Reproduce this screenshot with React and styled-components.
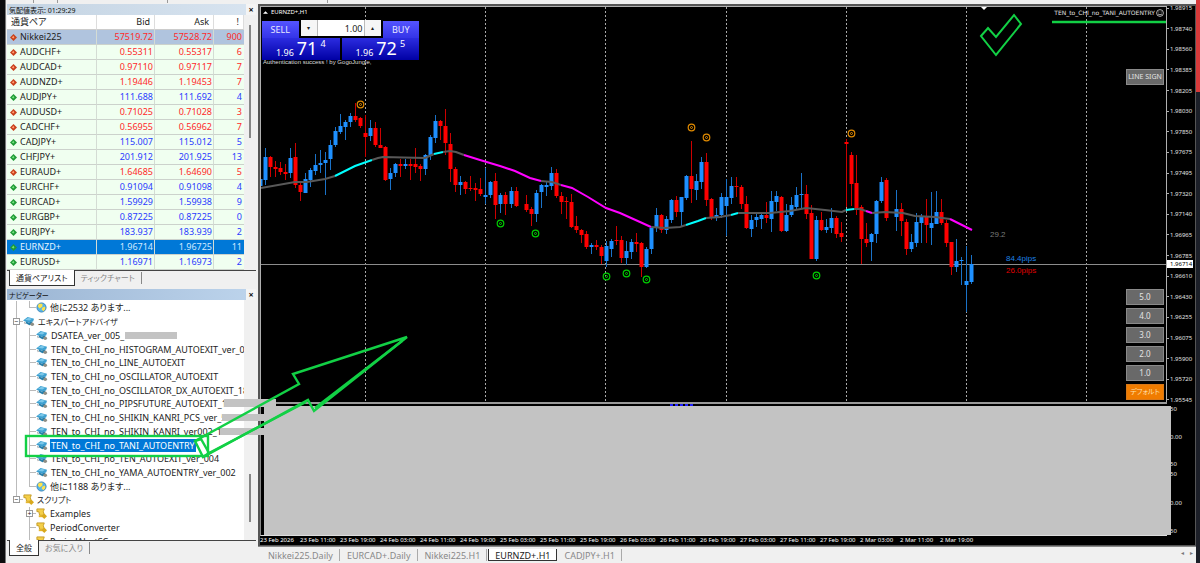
/** @format */
import React, { useState } from "react";
import styled, { createGlobalStyle } from "styled-components";

const quotes = [
  ["Nikkei225", "57519.72", "57528.72", "900", "down"],
  ["AUDCHF+", "0.55311", "0.55317", "6", "down"],
  ["AUDCAD+", "0.97110", "0.97117", "7", "down"],
  ["AUDNZD+", "1.19446", "1.19453", "7", "down"],
  ["AUDJPY+", "111.688", "111.692", "4", "up"],
  ["AUDUSD+", "0.71025", "0.71028", "3", "down"],
  ["CADCHF+", "0.56955", "0.56962", "7", "down"],
  ["CADJPY+", "115.007", "115.012", "5", "up"],
  ["CHFJPY+", "201.912", "201.925", "13", "up"],
  ["EURAUD+", "1.64685", "1.64690", "5", "down"],
  ["EURCHF+", "0.91094", "0.91098", "4", "up"],
  ["EURCAD+", "1.59929", "1.59938", "9", "up"],
  ["EURGBP+", "0.87225", "0.87225", "0", "up"],
  ["EURJPY+", "183.937", "183.939", "2", "up"],
  ["EURNZD+", "1.96714", "1.96725", "11", "up"],
  ["EURUSD+", "1.16971", "1.16973", "2", "up"],
];

const tree = [
  { icon: "globe", text: "他に2532 あります...", last: true },
  { icon: "hat", text: "エキスパートアドバイザ", root: true },
  { icon: "hat", text: "DSATEA_ver_005_", mask: true },
  { icon: "hat", text: "TEN_to_CHI_no_HISTOGRAM_AUTOEXIT_ver_004" },
  { icon: "hat", text: "TEN_to_CHI_no_LINE_AUTOEXIT" },
  { icon: "hat", text: "TEN_to_CHI_no_OSCILLATOR_AUTOEXIT" },
  { icon: "hat", text: "TEN_to_CHI_no_OSCILLATOR_DX_AUTOEXIT_18" },
  { icon: "hat", text: "TEN_to_CHI_no_PIPSFUTURE_AUTOEXIT_18DBE" },
  { icon: "hat", text: "TEN_to_CHI_no_SHIKIN_KANRI_PCS_ver_5" },
  { icon: "hat", text: "TEN_to_CHI_no_SHIKIN_KANRI_ver002_10" },
  { icon: "hat", text: "TEN_to_CHI_no_TANI_AUTOENTRY", selected: true },
  { icon: "hat", text: "TEN_to_CHI_no_TEN_AUTOEXIT_ver_004" },
  { icon: "hat", text: "TEN_to_CHI_no_YAMA_AUTOENTRY_ver_002" },
  { icon: "globe", text: "他に1188 あります...", last: true },
  { icon: "scroll", text: "スクリプト", root: true, end: true },
  { icon: "scroll", text: "Examples", expand: true, outer: true },
  { icon: "scroll", text: "PeriodConverter", outer: true },
  { icon: "scroll", text: "PeriodAlertSC", outer: true },
];

const prices = [
  "1.98915", "1.98740", "1.98560", "1.98385", "1.98205", "1.98030", "1.97850",
  "1.97675", "1.97495", "1.97320", "1.97140", "1.96965", "1.96785", "1.96610",
  "1.96430", "1.96255", "1.96075", "1.95900", "1.95720", "1.95545",
];

const times = [
  "23 Feb 2026", "23 Feb 11:00", "23 Feb 19:00", "24 Feb 03:00", "24 Feb 11:00",
  "24 Feb 19:00", "25 Feb 03:00", "25 Feb 11:00", "25 Feb 19:00", "26 Feb 03:00",
  "26 Feb 11:00", "26 Feb 19:00", "27 Feb 03:00", "27 Feb 11:00", "27 Feb 19:00",
  "2 Mar 03:00", "2 Mar 11:00", "2 Mar 19:00",
];

// index, high, body top, body bottom, low, 1 = up / 0 = down
const candles = [
  [0, 175, 179, 186, 193, 1], [1, 148, 157, 180, 185, 1], [2, 156, 157, 167, 177, 0],
  [3, 161, 167, 169, 177, 0], [4, 162, 168, 172, 175, 0], [5, 164, 172, 174, 180, 0],
  [6, 148, 158, 173, 178, 1], [7, 143, 157, 185, 188, 0], [8, 183, 185, 192, 201, 0],
  [9, 173, 179, 193, 193, 1], [10, 168, 170, 180, 187, 1], [11, 154, 165, 171, 175, 1],
  [12, 150, 163, 165, 173, 1], [13, 152, 160, 163, 195, 1], [14, 140, 145, 159, 170, 1],
  [15, 127, 131, 145, 147, 1], [16, 114, 126, 132, 134, 1], [17, 120, 122, 127, 140, 1],
  [18, 113, 116, 122, 127, 1], [19, 103, 116, 120, 122, 0], [20, 117, 118, 126, 128, 0],
  [21, 115, 133, 137, 157, 0], [22, 120, 128, 136, 141, 1], [23, 122, 128, 145, 147, 0],
  [24, 128, 145, 148, 148, 0], [25, 146, 147, 180, 181, 0], [26, 168, 173, 179, 190, 1],
  [27, 163, 164, 173, 177, 1], [28, 159, 164, 166, 177, 0], [29, 159, 164, 166, 169, 1],
  [30, 159, 164, 166, 180, 0], [31, 148, 164, 167, 173, 0], [32, 164, 166, 169, 181, 0],
  [33, 154, 155, 169, 175, 1], [34, 135, 137, 156, 160, 1], [35, 115, 121, 138, 143, 1],
  [36, 120, 121, 126, 140, 0], [37, 109, 126, 143, 155, 0], [38, 133, 144, 169, 182, 0],
  [39, 167, 169, 185, 192, 0], [40, 176, 182, 185, 195, 1], [41, 181, 182, 189, 194, 0],
  [42, 176, 188, 189, 191, 0], [43, 183, 188, 190, 201, 0], [44, 178, 189, 194, 196, 0],
  [45, 168, 195, 197, 204, 1], [46, 181, 182, 195, 198, 1], [47, 173, 181, 205, 219, 0],
  [48, 193, 195, 204, 213, 1], [49, 192, 195, 204, 215, 0], [50, 187, 191, 204, 208, 1],
  [51, 187, 191, 206, 207, 0], [53, 195, 204, 210, 212, 0], [54, 207, 209, 214, 226, 0],
  [55, 190, 193, 214, 222, 1], [56, 184, 185, 192, 208, 1], [57, 182, 185, 187, 196, 1],
  [58, 167, 173, 186, 190, 1], [59, 169, 173, 196, 198, 0], [60, 192, 196, 202, 214, 0],
  [61, 197, 201, 202, 219, 0], [62, 194, 202, 227, 228, 0], [63, 216, 226, 230, 233, 0],
  [64, 229, 230, 235, 243, 0], [65, 231, 234, 247, 249, 0], [66, 243, 245, 247, 254, 1],
  [67, 240, 245, 247, 250, 0], [68, 245, 247, 256, 264, 0], [69, 241, 246, 261, 267, 1],
  [70, 239, 241, 249, 257, 1], [71, 226, 240, 241, 245, 0], [72, 236, 240, 258, 263, 0],
  [73, 241, 251, 258, 265, 1], [74, 239, 242, 252, 259, 1], [75, 233, 242, 244, 252, 0],
  [76, 242, 243, 267, 277, 0], [77, 247, 249, 267, 268, 1], [78, 227, 228, 249, 254, 1],
  [79, 208, 215, 228, 232, 1], [80, 214, 215, 230, 233, 0], [81, 216, 219, 230, 234, 1],
  [82, 199, 200, 220, 223, 1], [83, 196, 200, 212, 217, 0], [84, 197, 197, 212, 226, 1],
  [85, 175, 176, 198, 200, 1], [86, 141, 176, 189, 203, 0], [87, 174, 181, 190, 200, 1],
  [88, 157, 162, 182, 189, 1], [89, 153, 162, 200, 206, 0], [90, 198, 199, 218, 220, 0],
  [91, 208, 215, 217, 221, 1], [92, 193, 197, 215, 218, 1], [93, 179, 197, 206, 236, 1],
  [94, 177, 186, 198, 204, 1], [95, 177, 186, 187, 197, 0], [96, 185, 187, 204, 209, 0],
  [97, 196, 204, 228, 229, 0], [98, 215, 220, 229, 237, 1], [99, 214, 217, 220, 227, 1],
  [100, 213, 215, 219, 229, 1], [101, 202, 215, 218, 223, 0], [102, 191, 201, 219, 232, 1],
  [103, 191, 196, 202, 211, 1], [104, 196, 197, 231, 232, 0], [105, 204, 215, 231, 232, 1],
  [106, 197, 205, 215, 217, 1], [107, 187, 195, 207, 209, 1], [108, 173, 194, 195, 209, 1],
  [109, 185, 194, 214, 219, 0], [110, 205, 213, 259, 259, 0], [111, 216, 220, 259, 261, 1],
  [112, 212, 220, 230, 231, 0], [113, 219, 227, 230, 233, 1], [114, 208, 218, 228, 233, 1],
  [115, 216, 218, 234, 238, 0], [116, 222, 233, 237, 242, 0], [117, 139, 142, 144, 207, 0],
  [118, 152, 155, 184, 206, 0], [119, 155, 183, 208, 215, 0], [120, 205, 207, 239, 264, 0],
  [121, 223, 239, 243, 247, 0], [122, 233, 234, 242, 261, 1], [123, 200, 201, 234, 243, 1],
  [124, 177, 182, 201, 203, 1], [125, 178, 180, 218, 221, 0], [127, 190, 209, 217, 231, 1],
  [128, 203, 209, 221, 236, 0], [129, 219, 222, 249, 255, 0], [130, 234, 242, 249, 252, 1],
  [131, 213, 222, 243, 247, 1], [132, 214, 217, 223, 243, 1], [133, 199, 217, 225, 243, 0],
  [134, 192, 223, 228, 245, 1], [135, 191, 212, 224, 224, 1], [136, 199, 212, 223, 225, 0],
  [137, 220, 223, 243, 247, 0], [138, 242, 242, 267, 275, 0], [139, 239, 261, 267, 272, 1],
  [140, 257, 260, 261, 285, 1], [141, 246, 281, 285, 312, 1], [142, 255, 264, 282, 284, 1],
];

const average = [
  ["#585858", "261,188 295,182 307,182 325,179 335,176"],
  ["#00ffff", "335,176 355,166 372,160"],
  ["#585858", "372,160 378,158 383,157 425,158 434,154"],
  ["#00ffff", "434,154 443,152"],
  ["#585858", "443,152 450,151 456,152 464,155"],
  ["#ff00ff", "464,155 480,160 500,166 515,171 530,178 541,181"],
  ["#585858", "541,181 552,182 561,185"],
  ["#ff00ff", "561,185 572,188 588,197 606,208 620,213 640,222 651,227"],
  ["#585858", "651,227 665,228 680,227 686,225"],
  ["#00ffff", "686,225 698,221 706,218"],
  ["#585858", "706,218 720,217 731,215"],
  ["#00ffff", "731,215 738,213"],
  ["#585858", "738,213 770,213 790,211 806,208 825,210 842,212 846,210"],
  ["#00ffff", "846,210 854,209"],
  ["#585858", "854,209 860,209 866,211"],
  ["#ff00ff", "866,211 872,213"],
  ["#585858", "872,213 885,212 903,213 915,216 935,217 950,219"],
  ["#ff00ff", "950,219 960,224 966,227 972,230"],
];

const sellSignals = [[360, 104], [691, 127], [706, 137], [851, 133]];
const buySignals = [[500, 223], [535, 233], [606, 276], [626, 273], [646, 279], [816, 275]];
const days = [366, 486, 606, 727, 847, 967, 1087];
const sizes = ["5.0", "4.0", "3.0", "2.0", "1.0"];
const chartTabs = ["Nikkei225.Daily", "EURCAD+.Daily", "Nikkei225.H1", "EURNZD+.H1", "CADJPY+.H1"];

function TreeIcon({ name }) {
  if (name === "globe")
    return (
      <svg width="11" height="11" viewBox="0 0 12 12">
        <circle cx="6" cy="6" r="5" fill="#58b4e8" stroke="#3b84b8" />
        <path d="M3 2l4 0 0 3-3 2-2-2zM7 6l3-1 0 3-2 2-2-2z" fill="#ffe34a" />
      </svg>
    );
  if (name === "scroll")
    return (
      <svg width="11" height="11" viewBox="0 0 12 12">
        <path d="M1 1h8l-1 3 1 4H4L3 4H1z" fill="#f4cf4a" stroke="#c49a24" />
        <path d="M3 8h6v2H3z" fill="#e4b730" />
        <path d="M9 6l3 3-3 3-3-3z" fill="#d9a91c" />
      </svg>
    );
  return (
    <svg width="12" height="11" viewBox="0 0 13 12">
      <path d="M0 5l5-4 7 2-1 3-6 1z" fill="#3ea0d0" />
      <path d="M2 4l4-2 4 1-3 2z" fill="#7cc8ea" />
      <path d="M3 6l3 1 4-1v3l-3 1-4-2z" fill="#267fab" />
      <path d="M1 6l2 2-1 1z" fill="#8a8a8a" />
      <circle cx="10" cy="9" r="2" fill="#8f8f86" />
    </svg>
  );
}

function MarketWatch() {
  return (
    <>
      <TitleBar $pale>
        気配値表示: 01:29:29
        <Close aria-label="close market watch">×</Close>
      </TitleBar>
      <Scroller>
        <Quotes>
          <thead>
            <tr>
              <Head $left>通貨ペア</Head>
              <Head $w="58px">Bid</Head>
              <Head $w="59px">Ask</Head>
              <Head $w="30px">!</Head>
            </tr>
          </thead>
          <tbody>
            {quotes.map(([name, bid, ask, spread, dir], i) => (
              <QuoteRow key={name} $dir={dir} $first={i === 0} $active={name === "EURNZD+"}>
                <Cell $left>
                  <Symbol>
                    <svg width="7" height="7" viewBox="0 0 8 8">
                      <path
                        d="M4 0l4 4-4 4-4-4z"
                        fill={dir === "up" ? "#1f9a36" : "#c8401c"}
                      />
                      <path d="M4 2l1 2-1 1-2-1z" fill={dir === "up" ? "#6fe07c" : "#ff9a70"} />
                    </svg>
                    {name}
                  </Symbol>
                </Cell>
                <Cell>{bid}</Cell>
                <Cell>{ask}</Cell>
                <Cell>{spread}</Cell>
              </QuoteRow>
            ))}
          </tbody>
        </Quotes>
        <Track>
          <Thumb $top="10px" $height="113px" />
        </Track>
      </Scroller>
      <PanelTabs>
        <PanelTab $active>通貨ペアリスト</PanelTab>
        <PanelTab>ティックチャート</PanelTab>
      </PanelTabs>
    </>
  );
}

function Navigator() {
  return (
    <>
      <TitleBar>
        ナビゲーター
        <Close aria-label="close navigator">×</Close>
      </TitleBar>
      <NavBody>
        <Tree>
          {tree.map((n) => (
            <Node key={n.text}>
              <Guide $end={n.end} $none={n.outer} $across={n.root}>
                {n.root && <Expander>−</Expander>}
              </Guide>
              {!n.root && (
                <Guide $end={n.last} $across>
                  {n.expand && <Expander>+</Expander>}
                </Guide>
              )}
              <TreeIcon name={n.icon} />
              <NodeText $selected={n.selected} $kana={n.root}>
                {n.text}
              </NodeText>
              {n.mask && <Mask />}
            </Node>
          ))}
        </Tree>
        <Track>
          <Thumb $top="174px" $height="48px" />
        </Track>
      </NavBody>
      <PanelTabs>
        <PanelTab $active>全般</PanelTab>
        <PanelTab>お気に入り</PanelTab>
      </PanelTabs>
    </>
  );
}

function Signal({ x, y, color }) {
  return (
    <g fill="none" stroke={color}>
      <circle cx={x + 0.5} cy={y + 0.5} r="3.3" strokeWidth="1.2" />
      <circle cx={x + 0.5} cy={y + 0.5} r="1" />
    </g>
  );
}

function Candles() {
  return (
    <Drawing height="395">
      <g transform="translate(-261 -7)">
        {days.map((x) => (
          <path key={x} d={`M${x - 0.5} 7V402`} stroke="#a8a8a8" strokeDasharray="2 2" />
        ))}
        <path d="M261 264.5H1166" stroke="#8c8c8c" />
        {candles.map(([i, high, top, bottom, low, up]) => {
          const x = Math.round(260 + i * 5.01);
          return (
            <g key={i}>
              <rect x={x} y={high} width="1" height={low - high} fill={up ? "#1a72c8" : "#cc0000"} />
              <rect
                x={x - 1.5}
                y={top}
                width="4"
                height={Math.max(bottom - top, 1)}
                fill={up ? "#1e90ff" : "#ff0000"}
              />
            </g>
          );
        })}
        {average.map(([color, points]) => (
          <polyline key={points} points={points} fill="none" stroke={color} strokeWidth="2" />
        ))}
        {sellSignals.map(([x, y]) => (
          <Signal key={x} x={x} y={y} color="#e08a00" />
        ))}
        {buySignals.map(([x, y]) => (
          <Signal key={x} x={x} y={y} color="#00d000" />
        ))}
        <path d="M981 7h6l-3 3z" fill="#fff" />
        <ChartText x="990" y="237" fill="#7a7a7a">29.2</ChartText>
        <ChartText x="1006" y="261" fill="#1e82e6">84.4pips</ChartText>
        <ChartText x="1006" y="273" fill="#e00000">26.0pips</ChartText>
      </g>
    </Drawing>
  );
}

function OneClick() {
  const [lot, setLot] = useState("1.00");
  const step = (d) => setLot((Number(lot) + d).toFixed(2));
  return (
    <Trade>
      <TradeTop>
        <Side>SELL</Side>
        <Lot>
          <Step aria-label="less" onClick={() => step(-0.01)}>▾</Step>
          <LotInput aria-label="lots" value={lot} onChange={(e) => setLot(e.target.value)} />
          <Step aria-label="more" onClick={() => step(0.01)}>▴</Step>
        </Lot>
        <Side>BUY</Side>
      </TradeTop>
      <TradeBottom>
        <Quote>
          1.96 <Big>71</Big>
          <Sup>4</Sup>
        </Quote>
        <Quote>
          1.96 <Big>72</Big>
          <Sup>5</Sup>
        </Quote>
      </TradeBottom>
    </Trade>
  );
}

function ChartWindow() {
  const [tab, setTab] = useState("EURNZD+.H1");
  return (
    <ChartColumn>
      <Frame>
        <Plot>
          <Candles />
          <ChartTitle>
            <svg width="5" height="3" viewBox="0 0 6 3">
              <path d="M0 3l3-3 3 3z" fill="#fff" />
            </svg>
            EURNZD+,H1
          </ChartTitle>
          <Auth>Authentication success ! by GogoJungle,</Auth>
          <OneClick />
          <Expert>
            TEN_to_CHI_no_TANI_AUTOENTRY
            <svg width="8" height="8" viewBox="0 0 8 8" fill="none" stroke="#ddd" strokeWidth="0.8">
              <circle cx="4" cy="4" r="3.4" />
              <path d="M2 5q2 1.6 4 0M2.8 2.6v.8M5.2 2.6v.8" />
            </svg>
          </Expert>
          <SignStack>
            <GreyButton>LINE SIGN</GreyButton>
          </SignStack>
          <SizeStack>
            {sizes.map((s) => (
              <GreyButton key={s} $large>{s}</GreyButton>
            ))}
            <GreyButton $orange>デフォルト</GreyButton>
          </SizeStack>
        </Plot>
        <Axis>
          {prices.map((p) => (
            <Price key={p}>{p}</Price>
          ))}
          <Current>1.96714</Current>
        </Axis>
        <Divider />
        <SubPlot>
          <Cover />
        </SubPlot>
        <SubAxis>
          <Level>50</Level>
          <Level>0.00</Level>
          <Level>50</Level>
          <Level>50</Level>
          <Level>0.00</Level>
          <Level>50</Level>
        </SubAxis>
        <TimeAxis>
          {times.map((t) => (
            <Time key={t}>{t}</Time>
          ))}
        </TimeAxis>
      </Frame>
      <ChartTabs>
        {chartTabs.map((t) => (
          <ChartTab key={t} $active={t === tab} onClick={() => setTab(t)}>
            {t}
          </ChartTab>
        ))}
        <Arrows>
          <span>◂</span>
          <span>▸</span>
        </Arrows>
      </ChartTabs>
    </ChartColumn>
  );
}

function Markup() {
  return (
    <MarkupLayer width="1200" height="563">
      <g fill="#c3c3c3">
        <rect x="224" y="399" width="52" height="8" />
        <rect x="222" y="414" width="43" height="7" />
        <rect x="220" y="428" width="46" height="7" />
      </g>
      <g fill="none" stroke="#12d045" strokeWidth="2.4">
        <rect x="26" y="436" width="182" height="20" />
        <path d="M195 441L299 384 293 374 407 337 314 411 308 400 203 457z" />
        <path d="M195 441l6-2 8 14-6 4M209 453L306 402M315 408L402 341" />
        <path d="M1052 22H1166" />
      </g>
      <path d="M981 36l7-8 8 9 18-22 7 9-25 31z" fill="none" stroke="#12d045" strokeWidth="2" />
    </MarkupLayer>
  );
}

function App() {
  return (
    <Shell>
      <GlobalStyle />
      <LeftEdge />
      <Desk>
        <Toolbar>
          <Grip $w="28px" />
          <Grip $w="24px" />
          <Grip $w="110px" />
          <Grip $w="160px" />
        </Toolbar>
        <Workspace>
          <Sidebar>
            <MarketWatch />
            <Gap />
            <Navigator />
          </Sidebar>
          <ChartWindow />
        </Workspace>
      </Desk>
      <RightEdge />
      <Markup />
    </Shell>
  );
}

const GlobalStyle = createGlobalStyle`
  * {
    box-sizing: border-box;
  }
  body {
    margin: 0;
    font-family: "Noto Sans", "Noto Sans CJK JP", sans-serif;
    font-size: 9px;
    color: #222;
    font-feature-settings: "palt";
  }
  button, input {
    font: inherit;
    color: inherit;
    border: 0;
    margin: 0;
    padding: 0;
    border-radius: 0;
    background: none;
  }
`;
const Shell = styled.div`
  position: relative;
  display: flex;
  height: 100vh;
  min-height: 563px;
  background: #f0f0f0;
  overflow: hidden;
`;
const LeftEdge = styled.div`
  width: 6px;
  background: #0c0c0e;
  border-right: 1px solid #777;
`;
const RightEdge = styled.div`
  width: 4px;
  background: linear-gradient(#d83a3a 92px, #1c1f28 92px);
`;
const Desk = styled.div`
  flex: 1;
  min-width: 0;
  display: flex;
  flex-direction: column;
`;
const Toolbar = styled.div`
  height: 4px;
  display: flex;
  background: #f0f0f0;
`;
const Grip = styled.div`
  width: ${(p) => p.$w};
  height: 3px;
  border-right: 1px solid #999;
`;
const Workspace = styled.div`
  flex: 1;
  min-height: 0;
  display: flex;
`;
const Sidebar = styled.div`
  width: 252px;
  display: flex;
  flex-direction: column;
  padding: 0 2px 7px 1px;
  background: #f0f0f0;
`;
const TitleBar = styled.div`
  height: 11px;
  flex-shrink: 0;
  display: flex;
  align-items: center;
  justify-content: space-between;
  padding-left: 2px;
  font-size: 7px;
  color: #111;
  background: ${(p) =>
    p.$pale
      ? "linear-gradient(90deg, #c3d3e2, #d8e4f0)"
      : "linear-gradient(90deg, #9bb5d3, #bdd4ec)"};
`;
const Close = styled.button`
  width: 10px;
  height: 11px;
  background: #f4f4f4;
  font-size: 9px;
  font-weight: 700;
  line-height: 10px;
`;
const Scroller = styled.div`
  display: flex;
  height: 255px;
  flex-shrink: 0;
`;
const Quotes = styled.table`
  flex: 1;
  table-layout: fixed;
  border-collapse: separate;
  border-spacing: 0;
  background: #fff;
`;
const Head = styled.th`
  width: ${(p) => p.$w || "auto"};
  height: 15px;
  padding: 0 4px;
  font-weight: 400;
  line-height: 14px;
  text-align: ${(p) => (p.$left ? "left" : "right")};
  border-right: 1px solid #ddd;
  border-bottom: 1px solid #ccc;
`;
const QuoteRow = styled.tr`
  background: ${(p) => (p.$active ? "#0078d7" : p.$first ? "#b0c4de" : "#f0fff0")};
  color: ${(p) => (p.$active ? "#cfe8ff" : p.$dir === "up" ? "#2a3cff" : "#ff2a2a")};
  td:first-child {
    color: ${(p) => (p.$active ? "#e4f4ff" : "#222")};
  }
`;
const Cell = styled.td`
  height: 15px;
  padding: 0 ${(p) => (p.$left ? "3px" : "1px")};
  line-height: 14px;
  text-align: ${(p) => (p.$left ? "left" : "right")};
  border-right: 1px solid #d4dcd4;
  border-bottom: 1px solid #ccd2cc;
  &:last-child {
    padding-right: 2px;
    border-right: 0;
  }
`;
const Symbol = styled.span`
  display: flex;
  align-items: center;
  gap: 3px;
`;
const Track = styled.div`
  width: 12px;
  flex-shrink: 0;
  background: #f0f0f0;
`;
const Thumb = styled.div`
  width: 2px;
  height: ${(p) => p.$height};
  margin: ${(p) => p.$top} 0 0 5px;
  background: #868686;
`;
const PanelTabs = styled.div`
  height: 16px;
  flex-shrink: 0;
  display: flex;
  padding-left: 2px;
  border-top: 1px solid #444;
`;
const PanelTab = styled.button`
  height: ${(p) => (p.$active ? "16px" : "12px")};
  margin-top: ${(p) => (p.$active ? "-1px" : "1px")};
  padding: 0 6px;
  font-size: 8px;
  line-height: 12px;
  color: ${(p) => (p.$active ? "#222" : "#888")};
  background: ${(p) => (p.$active ? "#fff" : "none")};
  border: ${(p) => (p.$active ? "1px solid #333" : "0 solid #888")};
  border-top-width: 0;
  border-right-width: 1px;
`;
const Gap = styled.div`
  height: 3px;
  flex-shrink: 0;
`;
const NavBody = styled.div`
  flex: 1;
  min-height: 0;
  display: flex;
  overflow: hidden;
  background: #fff;
`;
const Tree = styled.ul`
  flex: 1;
  min-width: 0;
  height: calc(100% + 8px);
  margin: 0;
  padding: 1px 0 0 3px;
  list-style: none;
  display: flex;
  flex-direction: column;
  overflow: hidden;
`;
const Node = styled.li`
  flex: 1;
  min-height: 0;
  display: flex;
  align-items: center;
  white-space: nowrap;
  line-height: 13px;
  svg {
    flex-shrink: 0;
  }
`;
const Guide = styled.span`
  align-self: stretch;
  width: 13px;
  flex-shrink: 0;
  display: flex;
  align-items: center;
  justify-content: center;
  background:
    linear-gradient(#bbb, #bbb) 6px 0 / 1px ${(p) => (p.$none ? "0" : p.$end ? "50%" : "100%")} no-repeat,
    linear-gradient(#bbb, #bbb) 6px 50% / ${(p) => (p.$across ? "7px" : "0")} 1px no-repeat;
`;
const Expander = styled.span`
  width: 7px;
  height: 7px;
  border: 1px solid #999;
  background: #fff;
  font-size: 7px;
  line-height: 5px;
  text-align: center;
`;
const NodeText = styled.span`
  margin-left: 2px;
  padding: 0 1px;
  font-size: ${(p) => (p.$kana ? "8px" : "9px")};
  color: ${(p) => (p.$selected ? "#fff" : "#222")};
  background: ${(p) => (p.$selected ? "#0078d7" : "none")};
`;
const Mask = styled.span`
  width: 52px;
  height: 7px;
  background: #c3c3c3;
`;
const ChartColumn = styled.div`
  flex: 1;
  min-width: 0;
  display: flex;
  flex-direction: column;
`;
const Frame = styled.div`
  flex: 1;
  min-height: 0;
  display: grid;
  grid-template-columns: 1fr 28px;
  grid-template-rows: 396px 4px 1fr 12px;
  background: #000;
  border: 2px solid #555;
  border-width: 2px 1px 1px 2px;
  font-size: 6px;
  line-height: 8px;
  color: #e0e0e0;
`;
const Plot = styled.div`
  position: relative;
  min-width: 0;
  border: 1px solid #b0b0b0;
  border-bottom: 0;
`;
const Drawing = styled.svg`
  display: block;
  width: 100%;
`;
const ChartText = styled.text`
  font-family: "Liberation Sans", sans-serif;
  font-size: 8px;
`;
const ChartTitle = styled.div`
  position: absolute;
  top: 1px;
  left: 2px;
  display: flex;
  align-items: center;
  gap: 3px;
  color: #fff;
`;
const Auth = styled.div`
  position: absolute;
  top: 51px;
  left: 2px;
  font-family: "Liberation Sans", sans-serif;
  color: #ddd;
`;
const Expert = styled.div`
  position: absolute;
  top: 2px;
  right: 2px;
  display: flex;
  align-items: center;
  gap: 1px;
  font-family: "DejaVu Sans", sans-serif;
`;
const Trade = styled.div`
  position: absolute;
  top: 13px;
  left: 1px;
  width: 157px;
  background: #000;
  font-size: 9px;
  color: #e8e8ff;
`;
const TradeTop = styled.div`
  display: flex;
  height: 17px;
  gap: 2px;
`;
const Side = styled.button`
  flex: 1;
  height: 17px;
  margin-top: 1px;
  line-height: 16px;
  background: linear-gradient(#5454ff, #3434e8);
`;
const Lot = styled.div`
  width: 80px;
  height: 16px;
  display: flex;
  background: #fff;
  color: #222;
`;
const LotInput = styled.input`
  flex: 1;
  min-width: 0;
  padding-right: 1px;
  text-align: right;
  border: 1px solid #bbb;
  border-width: 0 1px;
`;
const Step = styled.button`
  width: 16px;
  font-size: 6px;
  background: #f6f6f6;
`;
const TradeBottom = styled.div`
  display: flex;
  gap: 2px;
  margin-top: 1px;
`;
const Quote = styled.div`
  flex: 1;
  height: 22px;
  display: flex;
  align-items: flex-end;
  justify-content: center;
  gap: 3px;
  padding-bottom: 2px;
  line-height: 10px;
  color: #fff;
  background: linear-gradient(#2c2ce0, #0000a4);
`;
const Big = styled.span`
  font-size: 18px;
  line-height: 19px;
`;
const Sup = styled.span`
  align-self: flex-start;
  padding-top: 1px;
`;
const SignStack = styled.div`
  position: absolute;
  top: 62px;
  right: 2px;
  width: 38px;
`;
const SizeStack = styled.div`
  position: absolute;
  top: 282px;
  right: 2px;
  width: 38px;
  display: flex;
  flex-direction: column;
  gap: 3px;
`;
const GreyButton = styled.button`
  width: 38px;
  height: 16px;
  flex-shrink: 0;
  white-space: nowrap;
  font-size: ${(p) => (p.$large ? "8px" : "7px")};
  line-height: 14px;
  color: ${(p) => (p.$orange ? "#ffe0b0" : "#e4e4e4")};
  background: ${(p) => (p.$orange ? "#f07c00" : "#696969")};
  border: 1px solid ${(p) => (p.$orange ? "#d87818" : "#8a8a8a")};
`;
const Axis = styled.div`
  position: relative;
  display: flex;
  flex-direction: column;
  justify-content: space-between;
  margin: -2px 0;
  overflow: hidden;
`;
const Price = styled.span`
  display: flex;
  align-items: center;
  gap: 1px;
  &::before {
    content: "";
    width: 2px;
    height: 1px;
    background: #b0b0b0;
  }
`;
const Current = styled.span`
  position: absolute;
  top: 256px;
  left: 0;
  width: 26px;
  padding-left: 3px;
  color: #000;
  background: #fff;
`;
const Divider = styled.div`
  grid-column: 1 / 3;
  margin-right: 28px;
  border-top: 2px solid #999;
  background:
    repeating-linear-gradient(90deg, transparent 0 3px, #000 3px 5px),
    linear-gradient(90deg, transparent 410px, #2020ff 410px 434px, transparent 434px);
`;
const SubPlot = styled.div`
  position: relative;
  z-index: 1;
  border-left: 1px solid #888;
  border-bottom: 1px solid #ddd;
`;
const Cover = styled.div`
  height: 100%;
  margin: 0 -4px 0 3px;
  background: #c3c3c3;
`;
const SubAxis = styled.div`
  display: grid;
  grid-template-rows: 28px 27px 10px 29px 28px 8px;
  padding-left: 3px;
`;
const Level = styled.span`
  line-height: 6px;
`;
const TimeAxis = styled.div`
  grid-column: 1 / 3;
  display: flex;
  overflow: hidden;
`;
const Time = styled.span`
  flex: 0 0 40px;
  white-space: nowrap;
  line-height: 8px;
  color: #fff;
`;
const ChartTabs = styled.div`
  height: 17px;
  flex-shrink: 0;
  display: flex;
  align-items: flex-start;
  gap: 1px;
  padding: 2px 0 3px 4px;
  border-top: 1px solid #888;
`;
const ChartTab = styled.button`
  height: 12px;
  padding: 0 6px;
  overflow: hidden;
  line-height: 13px;
  color: ${(p) => (p.$active ? "#222" : "#888")};
  background: ${(p) => (p.$active ? "#fff" : "none")};
  border: ${(p) => (p.$active ? "1px solid #333" : "0 solid #aaa")};
  border-top-width: 0;
  border-right-width: 1px;
`;
const Arrows = styled.div`
  margin-left: auto;
  display: flex;
  gap: 6px;
  padding-right: 3px;
  font-size: 6px;
  color: #777;
`;
const MarkupLayer = styled.svg`
  position: absolute;
  z-index: 2;
  top: 0;
  left: 0;
  pointer-events: none;
`;

export default App;
